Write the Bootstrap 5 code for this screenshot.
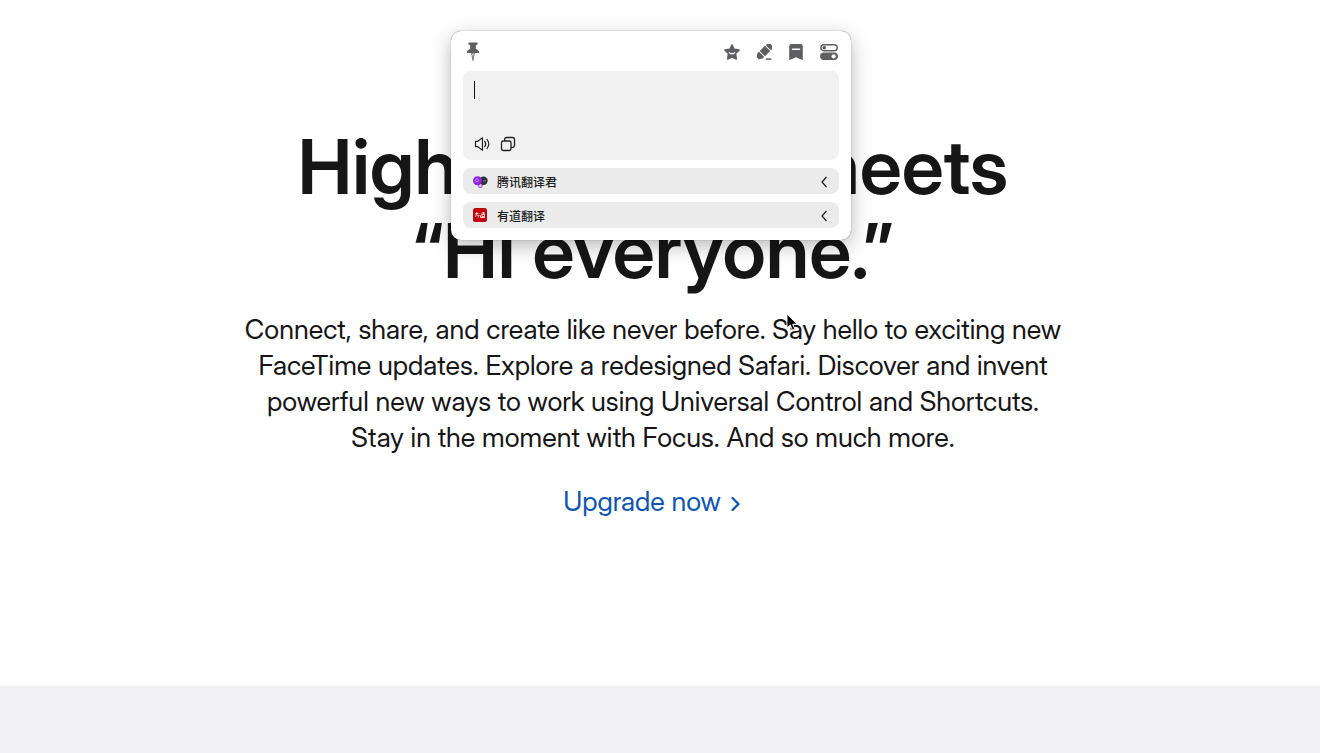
<!DOCTYPE html>
<html lang="en">
<head>
<meta charset="utf-8">
<meta name="viewport" content="width=device-width, initial-scale=1">
<title>macOS Monterey</title>
<link href="https://cdn.jsdelivr.net/npm/bootstrap@5.3.0/dist/css/bootstrap.min.css" rel="stylesheet">
<style>
  body { font-family: "Inter Display", Inter, "Noto Sans CJK SC", sans-serif; color: #161617; background: #fff; }
  .hero { padding: 124px 14px 0 0; }
  .headline { font-size: 76px; line-height: 84px; font-weight: 600; }
  .intro { font-size: 27px; line-height: 36px; }
  .upgrade { font-size: 27px; line-height: 36px; color: #0f55b0; }
  .band { height: 67px; background: #f2f2f4; }

  /* Floating translator window */
  .translator { top: 31px; left: 0; right: 18px; width: 400px; padding: 8px 12px 12px; gap: 8px; border-radius: 10px;
    background: #fff; box-shadow: 0 0 1px rgba(0,0,0,.65), 0 6px 20px rgba(0,0,0,.28); }
  .tool { padding: 0; border: 0; background: none; color: #5d5e61; display: flex; }
  .toolbar { height: 24px; padding: 2px 1px 0 2px; }
  .source { height: 89px; border-radius: 8px; background: #f1f1f1; padding: 10px 11px 8px; }
  .source textarea { resize: none; outline: 0; font-size: 14px; line-height: 18px; height: 36px; }
  .caret { left: 11px; top: 10px; width: 1px; height: 18px; background: #111; }
  .source .tool { color: #222; }
  .service { height: 26px; border: 0; border-radius: 8px; background: #ebebeb; padding: 1px 9px 0; color: #1c1c1c;
    font-family: "Noto Sans CJK SC", sans-serif; font-size: 12px; line-height: 26px; font-weight: 500; }
  .pointer { left: 786px; top: 313px; }
</style>
</head>
<body class="d-flex flex-column min-vh-100 position-relative">
<main class="hero flex-grow-1 text-center">
  <h1 class="headline mb-0">High powered meets<br>“Hi everyone.”</h1>
  <p class="intro mt-3 pt-1 mb-0">Connect, share, and create like never before. Say hello to exciting new<br>
    FaceTime updates. Explore a redesigned Safari. Discover and invent<br>
    powerful new ways to work using Universal Control and Shortcuts.<br>
    Stay in the moment with Focus. And so much more.</p>
  <a href="#" class="upgrade d-inline-flex align-items-center text-decoration-none mt-4 pt-1">Upgrade now
    <svg class="ms-2" width="14" height="18" viewBox="0 0 14 18" fill="none" stroke="currentColor" stroke-width="2.3" stroke-linecap="round" stroke-linejoin="round" aria-hidden="true"><path d="M3.500 5l6 6-6 6"/></svg>
  </a>
</main>
<footer class="band"></footer>

<section class="translator position-absolute mx-auto d-flex flex-column" aria-label="Translator">
  <div class="toolbar d-flex align-items-center justify-content-between">
    <button class="tool" type="button" aria-label="Pin">
      <svg width="16" height="20" viewBox="0 0 16 20" fill="currentColor"><path d="M3.500 .5h9v2l-1.700.7v3.800c2 .6 3.400 1.800 3.400 4H1.800c0-2.200 1.400-3.400 3.400-4V3.200L3.500 2.500z"/><path d="M6.600 11h2.800L8 18.500z" fill="#ddd" stroke="currentColor" stroke-width=".8"/></svg>
    </button>
    <div class="d-flex gap-3">
      <button class="tool" type="button" aria-label="Favorites">
        <svg width="16" height="16" viewBox="0 0 16 16"><path d="M8 .8l2.200 4.500 5 .7-3.600 3.500.8 5.500L8 13l-4.400 2 .8-5.500L.8 6l5-.7z" fill="currentColor" stroke="currentColor" stroke-width="1.400" stroke-linejoin="round"/><path d="M5.300 8.600q2.700 2.600 5.400 0" fill="none" stroke="#fff" stroke-width="1.200" stroke-linecap="round"/></svg>
      </button>
      <button class="tool" type="button" aria-label="Erase">
        <svg width="16" height="16" viewBox="0 0 16 16"><g transform="rotate(45 8 8)"><rect x="4.300" y="-2.300" width="7.400" height="4.200" rx="1.500" fill="currentColor"/><path d="M4.300 3h7.400v7.300H4.300zM4.300 11.400h7.400v2.200L9.500 16.800h-3L4.300 13.600z" fill="currentColor"/></g><path d="M9.800 15.100h5.400" stroke="currentColor" stroke-width="1.500"/></svg>
      </button>
      <button class="tool" type="button" aria-label="Bookmark">
        <svg width="16" height="16" viewBox="0 0 16 16"><path d="M3.500 0h9q2.300 0 2.300 2.300V16l-3.400-1.200L8 13.200l-3.400 1.600L1.200 16V2.300Q1.200 0 3.500 0z" fill="currentColor"/><path d="M4.500 5.300h7" stroke="#fff" stroke-width="1.500" stroke-linecap="round"/></svg>
      </button>
      <button class="tool" type="button" aria-label="Settings">
        <svg width="18" height="16" viewBox="0 0 18 16"><rect x=".8" y=".7" width="16.400" height="6" rx="3" fill="none" stroke="currentColor" stroke-width="1.400"/><circle cx="4.300" cy="3.700" r="1.800" fill="currentColor"/><rect x=".1" y="8.600" width="17.800" height="7.400" rx="3.700" fill="currentColor"/><circle cx="13.600" cy="12.300" r="2.100" fill="#fff"/></svg>
      </button>
    </div>
  </div>

  <div class="source position-relative d-flex flex-column justify-content-between">
    <textarea class="w-100 border-0 p-0 bg-transparent" aria-label="Text to translate"></textarea>
    <span class="caret position-absolute"></span>
    <div class="d-flex gap-2">
      <button class="tool" type="button" aria-label="Speak">
        <svg width="18" height="16" viewBox="0 0 18 16" fill="none" stroke="currentColor" stroke-width="1.200" stroke-linejoin="round" stroke-linecap="round"><path d="M1.500 5.300h2.300L8.500 1.800v12.400l-4.700-3.500H1.500z"/><path d="M10.800 5.300q1.900 2.700 0 5.400M13 3.400q3.600 4.600 0 9.200"/></svg>
      </button>
      <button class="tool" type="button" aria-label="Copy">
        <svg width="16" height="16" viewBox="0 0 16 16" fill="none" stroke="currentColor" stroke-width="1.300"><rect x="1.500" y="5" width="9.500" height="9.500" rx="1.800"/><path d="M4.700 5V3.300q0-1.800 1.800-1.800h6.200q1.800 0 1.800 1.800v6.200q0 1.800-1.800 1.800H11"/></svg>
      </button>
    </div>
  </div>

  <button class="service d-flex align-items-center" type="button">
    <svg class="me-2" width="17" height="16" viewBox="0 0 17 16" aria-hidden="true"><path d="M5.500 9h5.500l-1.300 4.500H7z" fill="#dcbcf6" stroke="#9540dd" stroke-width=".8"/><circle cx="11.500" cy="6.800" r="4.200" fill="#303038"/><circle cx="5.500" cy="6.800" r="4.500" fill="#8b22e4"/><circle cx="5" cy="6.300" r="1.500" fill="none" stroke="#c795f5"/><path d="M11 6.800h3" stroke="#888"/></svg>
    <span>腾讯翻译君</span>
    <svg class="ms-auto" width="12" height="12" viewBox="0 0 12 12" fill="none" stroke="currentColor" stroke-width="1.200" aria-hidden="true"><path d="M8.500 1L4 6l4.500 5"/></svg>
  </button>
  <button class="service d-flex align-items-center" type="button">
    <svg class="me-2" width="17" height="16" viewBox="0 0 17 16" aria-hidden="true"><rect x="1" y="0" width="14" height="14" rx="2.500" fill="#c3000d"/><path d="M3.300 5.500h3M5 4L3.500 9M4.700 7h1.600v2.500M7.500 5.500L8.400 6M7.500 7.500h1v2h4.500M9.500 5h3.500M9.800 6.500h2.700v2H9.800zM11.400 4v2" fill="none" stroke="#fff" stroke-width=".8"/></svg>
    <span>有道翻译</span>
    <svg class="ms-auto" width="12" height="12" viewBox="0 0 12 12" fill="none" stroke="currentColor" stroke-width="1.200" aria-hidden="true"><path d="M8.500 1L4 6l4.500 5"/></svg>
  </button>
</section>

<svg class="pointer position-absolute" width="13" height="19" viewBox="0 0 13 19" aria-hidden="true"><path d="M1 1v14l3.300-3 2.200 5.200 2.400-1-2.200-5h4.500z" fill="#000" stroke="#fff" stroke-width=".9"/></svg>
<script src="https://cdn.jsdelivr.net/npm/bootstrap@5.3.0/dist/js/bootstrap.bundle.min.js"></script>
</body>
</html>
